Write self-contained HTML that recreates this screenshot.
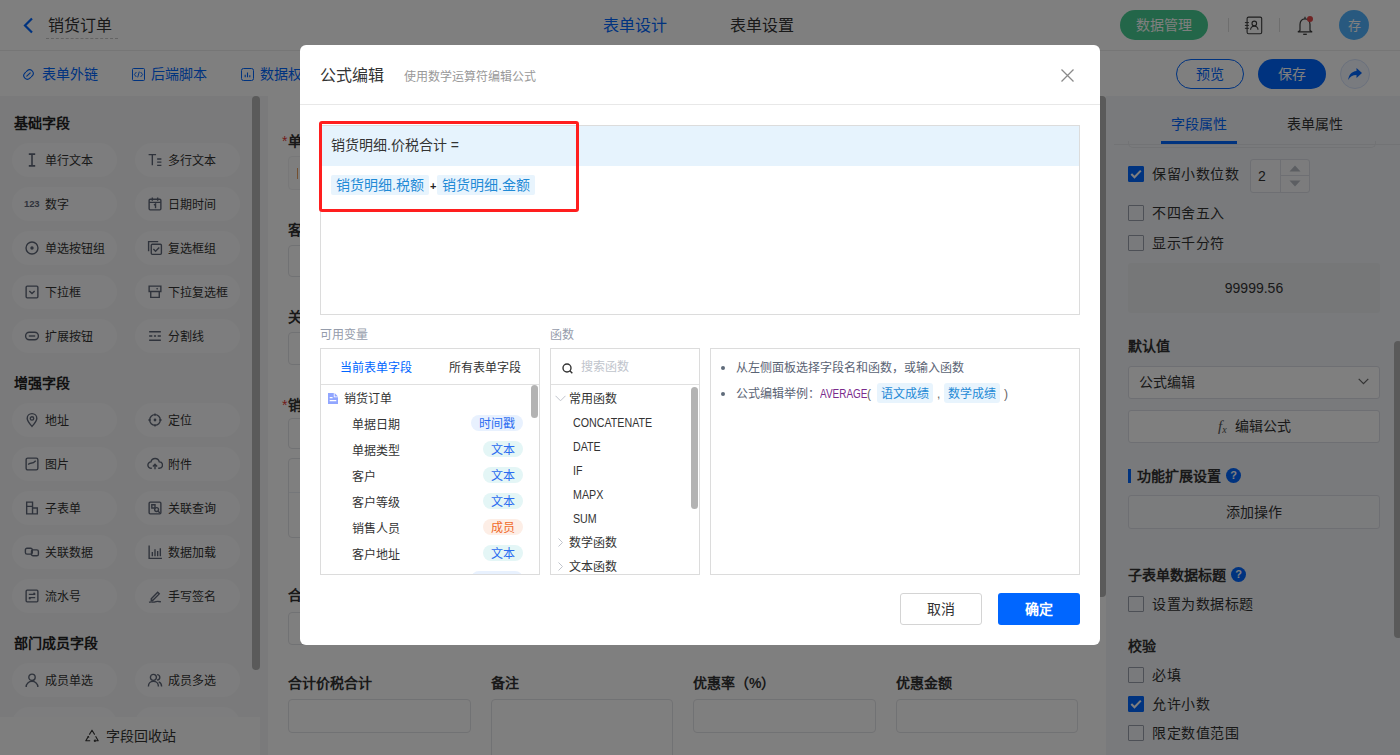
<!DOCTYPE html>
<html lang="zh-CN">
<head>
<meta charset="utf-8">
<style>
*{box-sizing:border-box;margin:0;padding:0}
html,body{width:1400px;height:755px;overflow:hidden;background:#fff}
body{position:relative;font-family:"Liberation Sans",sans-serif;color:#333;font-size:14px}
.a{position:absolute;white-space:nowrap}
.t14{font-size:14px;line-height:20px;height:20px}
.t16{font-size:16px;line-height:22px;height:22px;margin-top:1px}
.t12{font-size:12px;line-height:16px;height:16px}
svg{display:block}
/* page */
#hdr{left:0;top:0;width:1400px;height:51px;background:#fff;border-bottom:1px solid #ececec}
#tb{left:0;top:51px;width:1400px;height:45px;background:#fff}
#lp{left:0;top:96px;width:268px;height:659px;background:#f4f5f7}
#cv{display:none}
#form{left:268px;top:96px;width:838px;height:659px;background:#fff}
#rp{left:1106px;top:96px;width:294px;height:659px;background:#f3f5f8}
.pill{position:absolute;width:105px;height:34px;border-radius:17px;background:#fbfbfc}
.pill .ic{position:absolute;left:14px;top:10px;width:14px;height:14px}
.pill .tx{position:absolute;left:33px;top:7px;font-size:13px;line-height:20px;color:#333;white-space:nowrap}
.sec{position:absolute;left:14px;font-size:14px;font-weight:bold;line-height:20px;color:#222;margin-top:1px}
.lbl{position:absolute;font-size:14px;font-weight:bold;line-height:20px;color:#333}
.inp{position:absolute;border:1px solid #e2e4e8;border-radius:4px;background:#fff}
.cb{position:absolute;left:1128px;width:16px;height:16px;border:1px solid #9aa1ad;border-radius:1px;background:transparent}
.cb.on{background:#0066ff;border-color:#0066ff}
.cbt{position:absolute;left:1152px;font-size:14px;line-height:20px;color:#333;letter-spacing:.5px}
#ov{left:0;top:0;width:1400px;height:755px;background:rgba(0,0,0,.5)}
/* modal */
#md{left:300px;top:45px;width:800px;height:600px;background:#fff;border-radius:6px}
.m{position:absolute;white-space:nowrap}
.box{position:absolute;border:1px solid #dcdcdc;background:#fff}
.tag{display:inline-block;background:#e8f4fd;color:#1f8ad6;border-radius:2px}
.vt{position:absolute;height:16px;line-height:18px;font-size:12px;border-radius:8px;padding:0 8px;color:#2b6cf0;overflow:hidden}
.vt.b{background:#e8f1fe}
.vt.c{background:#e4f6f6}
.vt.o{background:#fdeee6;color:#f06a2a}
.vi{position:absolute;left:32px;font-size:12px;line-height:16px;color:#333}
.fi{position:absolute;left:22px;font-size:11.5px;line-height:16px;color:#333}
</style>
</head>
<body>
<!-- ============ HEADER ============ -->
<div class="a" id="hdr"></div>
<svg class="a" style="left:22px;top:17px" width="12" height="17" viewBox="0 0 12 17"><path d="M10 1.5 L3 8.5 L10 15.5" fill="none" stroke="#0066ff" stroke-width="2.2"/></svg>
<div class="a t16" style="left:48px;top:14px;color:#333">销货订单</div>
<div class="a" style="left:46px;top:38px;width:72px;border-top:1px dashed #c8c8c8"></div>
<div class="a t16" style="left:603px;top:14px;color:#0066ff">表单设计</div>
<div class="a t16" style="left:730px;top:14px;color:#333">表单设置</div>
<div class="a" style="left:1120px;top:10px;width:88px;height:30px;border-radius:15px;background:#47cd92"></div>
<div class="a t14" style="left:1136px;top:15px;color:#fff">数据管理</div>
<div class="a" style="left:1228px;top:18px;width:1px;height:14px;background:#ddd"></div>
<svg class="a" style="left:1244px;top:16px" width="19" height="19" viewBox="0 0 19 19"><rect x="3.1" y="1.1" width="14.6" height="16.6" rx="1.5" fill="none" stroke="#3c3c3c" stroke-width="1.1"/><circle cx="10.3" cy="7.4" r="2.3" fill="none" stroke="#3c3c3c" stroke-width="1.1"/><path d="M6.6 13.8 A3.7 3.7 0 0 1 14 13.8" fill="none" stroke="#3c3c3c" stroke-width="1.1"/><path d="M0.9 6.6H4.9M0.9 9.4H4.9M0.9 12.3H4.9" stroke="#3c3c3c" stroke-width="1"/></svg>
<div class="a" style="left:1279px;top:18px;width:1px;height:14px;background:#ddd"></div>
<svg class="a" style="left:1296px;top:15px" width="18" height="21" viewBox="0 0 18 21"><path d="M4 15.5 V9.5 C4 6.2 6 3.8 9 3.8 C12 3.8 14 6.2 14 9.5 V15.5 L15.8 16.8 H2.2 Z" fill="none" stroke="#3c3c3c" stroke-width="1.2" stroke-linejoin="round"/><path d="M7.2 19.3 H10.8" stroke="#3c3c3c" stroke-width="1.3"/><path d="M9 1.8 V3.8" stroke="#3c3c3c" stroke-width="1.2"/></svg>
<div class="a" style="left:1307px;top:16px;width:6px;height:6px;border-radius:50%;background:#e04848"></div>
<div class="a" style="left:1339px;top:10px;width:30px;height:30px;border-radius:50%;background:#50b3ff"></div>
<div class="a" style="left:1339px;top:16px;width:30px;text-align:center;font-size:13px;line-height:20px;color:#fff">存</div>

<!-- ============ TOOLBAR ============ -->
<div class="a" id="tb"></div>
<svg class="a" style="left:22px;top:68px" width="13" height="13" viewBox="0 0 13 13"><g fill="none" stroke="#0066ff" stroke-width="1.1" stroke-linecap="round"><path d="M4.38 3.53 L5.09 2.82 A3.6 3.6 0 0 1 10.18 7.91 L9.47 8.62"/><path d="M8.62 9.47 L7.91 10.18 A3.6 3.6 0 0 1 2.82 5.09 L3.53 4.38"/><path d="M4.80 8.20 L8.20 4.80"/></g></svg>
<div class="a t14" style="left:42px;top:64px;color:#0066ff">表单外链</div>
<svg class="a" style="left:132px;top:68px" width="13" height="13" viewBox="0 0 13 13"><rect x="0.5" y="0.5" width="12" height="12" rx="1" fill="none" stroke="#0066ff" stroke-width="1"/><path d="M4.4 4 L2.4 6.5 L4.4 9 M8.6 4 L10.6 6.5 L8.6 9 M7.3 3.6 L5.7 9.4" fill="none" stroke="#0066ff" stroke-width="0.95"/></svg>
<div class="a t14" style="left:151px;top:64px;color:#0066ff">后端脚本</div>
<svg class="a" style="left:241px;top:68px" width="13" height="13" viewBox="0 0 13 13"><rect x="0.5" y="0.5" width="12" height="12" rx="2" fill="none" stroke="#0066ff" stroke-width="1"/><path d="M4.2 6.8 V9.3 M6.5 4.6 V9.3 M8.8 7.3 V9.3" stroke="#0066ff" stroke-width="1.1"/></svg>
<div class="a t14" style="left:260px;top:64px;color:#0066ff">数据权限</div>
<div class="a" style="left:1176px;top:59px;width:68px;height:30px;border-radius:15px;border:1px solid #0066ff;background:#fff"></div>
<div class="a t14" style="left:1196px;top:64px;color:#0066ff">预览</div>
<div class="a" style="left:1258px;top:59px;width:68px;height:30px;border-radius:15px;background:#0066ff"></div>
<div class="a t14" style="left:1278px;top:64px;color:#fff">保存</div>
<div class="a" style="left:1340px;top:59px;width:30px;height:30px;border-radius:50%;background:#f2f6ff;border:1px solid #d6e2fa"></div>
<svg class="a" style="left:1347px;top:66px" width="16" height="16" viewBox="0 0 16 16"><path d="M9.5 2 L15 7 L9.5 12 V9 C5.5 9 3 10.5 1.2 14 C1.8 9 4.5 5.5 9.5 5 Z" fill="#0066ff"/></svg>

<!-- ============ LEFT PANEL ============ -->
<div class="a" id="lp"></div>
<div class="sec" style="top:112px">基础字段</div>
<div class="sec" style="top:371.5px">增强字段</div>
<div class="sec" style="top:631.5px">部门成员字段</div>
<div class="pill" style="left:12px;top:143px"></div>
<svg class="a" style="left:24px;top:152px" width="16" height="16" viewBox="-0.5 -0.5 15 15" fill="none" stroke="#5f6778" stroke-width="1.3"><path d="M4 1.5h6M4 12.5h6M7 1.5v11" stroke-width="1.5"/></svg>
<div class="a" style="left:45px;top:153px;font-size:12px;line-height:16px;color:#333">单行文本</div>
<div class="pill" style="left:135px;top:143px"></div>
<svg class="a" style="left:147px;top:152px" width="16" height="16" viewBox="-0.5 -0.5 15 15" fill="none" stroke="#5f6778" stroke-width="1.3"><path d="M1 2h7M4.5 2v10M9 6h4M9 9h4M9 12h4" stroke-width="1.3"/></svg>
<div class="a" style="left:168px;top:153px;font-size:12px;line-height:16px;color:#333">多行文本</div>
<div class="pill" style="left:12px;top:187px"></div>
<div class="a" style="left:24px;top:198px;font-size:9.5px;font-weight:bold;line-height:12px;color:#5f6778;letter-spacing:-0.1px">123</div>
<div class="a" style="left:45px;top:197px;font-size:12px;line-height:16px;color:#333">数字</div>
<div class="pill" style="left:135px;top:187px"></div>
<svg class="a" style="left:147px;top:196px" width="16" height="16" viewBox="-0.5 -0.5 15 15" fill="none" stroke="#5f6778" stroke-width="1.3"><rect x="1.5" y="2.5" width="11" height="10" rx="1"/><path d="M1.5 5.5h11M4.5 1v3M9.5 1v3M6 8l1.5-1v4"/></svg>
<div class="a" style="left:168px;top:197px;font-size:12px;line-height:16px;color:#333">日期时间</div>
<div class="pill" style="left:12px;top:231px"></div>
<svg class="a" style="left:24px;top:240px" width="16" height="16" viewBox="-0.5 -0.5 15 15" fill="none" stroke="#5f6778" stroke-width="1.3"><circle cx="7" cy="7" r="5.6"/><circle cx="7" cy="7" r="1.6" fill="#5f6778" stroke="none"/></svg>
<div class="a" style="left:45px;top:241px;font-size:12px;line-height:16px;color:#333">单选按钮组</div>
<div class="pill" style="left:135px;top:231px"></div>
<svg class="a" style="left:147px;top:240px" width="16" height="16" viewBox="-0.5 -0.5 15 15" fill="none" stroke="#5f6778" stroke-width="1.3"><path d="M1 10V1h9"/><rect x="3.5" y="3.5" width="9.5" height="9.5" rx="1"/><path d="M5.5 8l2 2 3.5-3.5"/></svg>
<div class="a" style="left:168px;top:241px;font-size:12px;line-height:16px;color:#333">复选框组</div>
<div class="pill" style="left:12px;top:275px"></div>
<svg class="a" style="left:24px;top:284px" width="16" height="16" viewBox="-0.5 -0.5 15 15" fill="none" stroke="#5f6778" stroke-width="1.3"><rect x="1.5" y="1.5" width="11" height="11" rx="1"/><path d="M4.5 6l2.5 2.5 2.5-2.5"/></svg>
<div class="a" style="left:45px;top:285px;font-size:12px;line-height:16px;color:#333">下拉框</div>
<div class="pill" style="left:135px;top:275px"></div>
<svg class="a" style="left:147px;top:284px" width="16" height="16" viewBox="-0.5 -0.5 15 15" fill="none" stroke="#5f6778" stroke-width="1.3"><path d="M1.5 1.5h11v5h-11zM3 6.5v5.5h8V6.5"/><path d="M8.5 3.5l1 1"/></svg>
<div class="a" style="left:168px;top:285px;font-size:12px;line-height:16px;color:#333">下拉复选框</div>
<div class="pill" style="left:12px;top:319px"></div>
<svg class="a" style="left:24px;top:328px" width="16" height="16" viewBox="-0.5 -0.5 15 15" fill="none" stroke="#5f6778" stroke-width="1.3"><rect x="1" y="3.5" width="12" height="7" rx="3.5"/><path d="M4 7h6"/></svg>
<div class="a" style="left:45px;top:329px;font-size:12px;line-height:16px;color:#333">扩展按钮</div>
<div class="pill" style="left:135px;top:319px"></div>
<svg class="a" style="left:147px;top:328px" width="16" height="16" viewBox="-0.5 -0.5 15 15" fill="none" stroke="#5f6778" stroke-width="1.3"><path d="M1.5 3h11M1.5 7h3M6 7h2M9.5 7h3M1.5 11h11"/></svg>
<div class="a" style="left:168px;top:329px;font-size:12px;line-height:16px;color:#333">分割线</div>
<div class="pill" style="left:12px;top:403px"></div>
<svg class="a" style="left:24px;top:412px" width="16" height="16" viewBox="-0.5 -0.5 15 15" fill="none" stroke="#5f6778" stroke-width="1.3"><path d="M7 13C3.5 9 2.5 7.3 2.5 5.5a4.5 4.5 0 0 1 9 0C11.5 7.3 10.5 9 7 13z"/><circle cx="7" cy="5.5" r="1.6"/></svg>
<div class="a" style="left:45px;top:413px;font-size:12px;line-height:16px;color:#333">地址</div>
<div class="pill" style="left:135px;top:403px"></div>
<svg class="a" style="left:147px;top:412px" width="16" height="16" viewBox="-0.5 -0.5 15 15" fill="none" stroke="#5f6778" stroke-width="1.3"><circle cx="7" cy="7" r="5"/><circle cx="7" cy="7" r="1.3" fill="#5f6778" stroke="none"/><path d="M7 0.8v2.2M7 11v2.2M0.8 7H3M11 7h2.2"/></svg>
<div class="a" style="left:168px;top:413px;font-size:12px;line-height:16px;color:#333">定位</div>
<div class="pill" style="left:12px;top:447px"></div>
<svg class="a" style="left:24px;top:456px" width="16" height="16" viewBox="-0.5 -0.5 15 15" fill="none" stroke="#5f6778" stroke-width="1.3"><rect x="1.5" y="1.5" width="11" height="11" rx="1.5"/><path d="M3.5 7.5C5 5 7 8 10.5 4"/></svg>
<div class="a" style="left:45px;top:457px;font-size:12px;line-height:16px;color:#333">图片</div>
<div class="pill" style="left:135px;top:447px"></div>
<svg class="a" style="left:147px;top:456px" width="16" height="16" viewBox="-0.5 -0.5 15 15" fill="none" stroke="#5f6778" stroke-width="1.3"><path d="M4 11H3.5a3 3 0 0 1-.3-6A4 4 0 0 1 11 5a3 3 0 0 1 0 6h-1"/><path d="M7 12V7.5M5 9.3l2-2 2 2"/></svg>
<div class="a" style="left:168px;top:457px;font-size:12px;line-height:16px;color:#333">附件</div>
<div class="pill" style="left:12px;top:491px"></div>
<svg class="a" style="left:24px;top:500px" width="16" height="16" viewBox="-0.5 -0.5 15 15" fill="none" stroke="#5f6778" stroke-width="1.3"><path d="M2 1.5h5.5v11H2zM7.5 7h4.5v5.5H7.5M2 5.5h5.5"/></svg>
<div class="a" style="left:45px;top:501px;font-size:12px;line-height:16px;color:#333">子表单</div>
<div class="pill" style="left:135px;top:491px"></div>
<svg class="a" style="left:147px;top:500px" width="16" height="16" viewBox="-0.5 -0.5 15 15" fill="none" stroke="#5f6778" stroke-width="1.3"><rect x="1.5" y="1.5" width="11" height="11" rx="1"/><path d="M4 4h3v3H4z"/><circle cx="8.5" cy="8.5" r="1.8"/><path d="M9.8 9.8l1.8 1.8"/></svg>
<div class="a" style="left:168px;top:501px;font-size:12px;line-height:16px;color:#333">关联查询</div>
<div class="pill" style="left:12px;top:535px"></div>
<svg class="a" style="left:24px;top:544px" width="16" height="16" viewBox="-0.5 -0.5 15 15" fill="none" stroke="#5f6778" stroke-width="1.3"><rect x="0.8" y="3.5" width="6.5" height="5.5" rx="1.5"/><rect x="6.5" y="5" width="6.5" height="5.5" rx="1.5"/></svg>
<div class="a" style="left:45px;top:545px;font-size:12px;line-height:16px;color:#333">关联数据</div>
<div class="pill" style="left:135px;top:535px"></div>
<svg class="a" style="left:147px;top:544px" width="16" height="16" viewBox="-0.5 -0.5 15 15" fill="none" stroke="#5f6778" stroke-width="1.3"><path d="M1.5 1v12h12M4.5 7v4M7 4.5v6.5M9.5 6v5M12 3.5v7.5"/></svg>
<div class="a" style="left:168px;top:545px;font-size:12px;line-height:16px;color:#333">数据加载</div>
<div class="pill" style="left:12px;top:579px"></div>
<svg class="a" style="left:24px;top:588px" width="16" height="16" viewBox="-0.5 -0.5 15 15" fill="none" stroke="#5f6778" stroke-width="1.3"><rect x="1.5" y="1.5" width="11" height="11" rx="1"/><path d="M4 5.5h6M8.5 4l1.5 1.5M10 8.5H4M5.5 10L4 8.5"/></svg>
<div class="a" style="left:45px;top:589px;font-size:12px;line-height:16px;color:#333">流水号</div>
<div class="pill" style="left:135px;top:579px"></div>
<svg class="a" style="left:147px;top:588px" width="16" height="16" viewBox="-0.5 -0.5 15 15" fill="none" stroke="#5f6778" stroke-width="1.3"><path d="M3.5 9.5L9.5 3.5l1.5 1.5-6 6H3.5zM1.5 13c2-1.5 3.5 0.5 5.5-0.5s3.5-0.5 5.5 0"/></svg>
<div class="a" style="left:168px;top:589px;font-size:12px;line-height:16px;color:#333">手写签名</div>
<div class="pill" style="left:12px;top:663px"></div>
<svg class="a" style="left:24px;top:672px" width="16" height="16" viewBox="-0.5 -0.5 15 15" fill="none" stroke="#5f6778" stroke-width="1.3"><circle cx="7" cy="4.5" r="3"/><path d="M1.5 13.5c0-3 2.5-5.3 5.5-5.3s5.5 2.3 5.5 5.3"/></svg>
<div class="a" style="left:45px;top:673px;font-size:12px;line-height:16px;color:#333">成员单选</div>
<div class="pill" style="left:135px;top:663px"></div>
<svg class="a" style="left:147px;top:672px" width="16" height="16" viewBox="-0.5 -0.5 15 15" fill="none" stroke="#5f6778" stroke-width="1.3"><circle cx="5.5" cy="4.5" r="2.8"/><path d="M0.8 13c0-2.8 2-4.8 4.7-4.8s4.7 2 4.7 4.8M9 2a2.5 2.5 0 0 1 0 5M10.5 8.7c1.6.6 2.7 2.2 2.7 4.3"/></svg>
<div class="a" style="left:168px;top:673px;font-size:12px;line-height:16px;color:#333">成员多选</div>
<div class="pill" style="left:12px;top:707px"></div>
<svg class="a" style="left:24px;top:716px" width="16" height="16" viewBox="-0.5 -0.5 15 15" fill="none" stroke="#5f6778" stroke-width="1.3"><rect x="1.5" y="1.5" width="11" height="11" rx="1"/></svg>
<div class="a" style="left:45px;top:717px;font-size:12px;line-height:16px;color:#333">部门单选</div>
<div class="pill" style="left:135px;top:707px"></div>
<svg class="a" style="left:147px;top:716px" width="16" height="16" viewBox="-0.5 -0.5 15 15" fill="none" stroke="#5f6778" stroke-width="1.3"><rect x="1.5" y="1.5" width="11" height="11" rx="1"/></svg>
<div class="a" style="left:168px;top:717px;font-size:12px;line-height:16px;color:#333">部门多选</div>
<div class="a" style="left:252px;top:96px;width:8px;height:574px;border-radius:4px;background:#b4b4b4"></div>
<div class="a" style="left:0;top:717px;width:260px;height:38px;background:#fdfdfd"></div>
<svg class="a" style="left:85px;top:729px" width="14" height="13" viewBox="0 0 14 13" fill="none" stroke="#5f6778" stroke-width="1.3"><path d="M4.3 5.6L7 1.2 9.7 5.6M10.6 7.2L13.2 11.8H9.2M10.4 10.5L9.2 11.8 10.4 13M5.2 11.8H0.8L3.4 7.4M2.4 7.9L3.4 7.4 3.9 8.6" stroke="#333" stroke-width="1.1" stroke-linejoin="round"/></svg>
<div class="a t14" style="left:106px;top:726px;color:#333">字段回收站</div>
<!-- ============ <div class="a" style="left:282px;top:131px;font-size:14px;line-height:20px;color:#e53935">*</div>
<div class="lbl" style="left:288px;top:131px">单据日期</div>
<div class="a" style="left:288px;top:156px;width:400px;height:34px;border:1px solid #f0f1f3;border-radius:4px;background:#fcfcfc"></div>
<div class="a" style="left:297px;top:168px;width:1px;height:11px;background:#e8a060"></div>
<div class="lbl" style="left:288px;top:220px">客户</div>
<div class="inp" style="left:288px;top:245px;width:400px;height:32px"></div>
<div class="lbl" style="left:288px;top:307px">关联单据</div>
<div class="inp" style="left:288px;top:332px;width:400px;height:33px"></div>
<div class="a" style="left:282px;top:395px;font-size:14px;line-height:20px;color:#e53935">*</div>
<div class="lbl" style="left:288px;top:395px">销货明细</div>
<div class="inp" style="left:288px;top:418px;width:790px;height:31px"></div>
<div class="inp" style="left:288px;top:458px;width:790px;height:80px"></div>
<div class="a" style="left:289px;top:492px;width:788px;height:1px;background:#ebeef5"></div>
<div class="lbl" style="left:288px;top:585px">合计金额</div>
<div class="inp" style="left:288px;top:612px;width:182px;height:33px"></div>
<div class="lbl" style="left:288px;top:673px">合计价税合计</div>
<div class="lbl" style="left:491px;top:673px">备注</div>
<div class="lbl" style="left:693px;top:673px">优惠率（%）</div>
<div class="lbl" style="left:896px;top:673px">优惠金额</div>
<div class="inp" style="left:288px;top:699px;width:183px;height:34px"></div>
<div class="inp" style="left:491px;top:699px;width:182px;height:70px"></div>
<div class="inp" style="left:693px;top:699px;width:183px;height:34px"></div>
<div class="inp" style="left:896px;top:699px;width:182px;height:34px"></div>
<div class="a" style="left:1100px;top:96px;width:6px;height:501px;border-radius:0 4px 4px 0;background:#b4b4b4"></div> ============ -->
<div class="a" id="cv"></div>
<div class="a" id="form"></div>
<div class="a" style="left:282px;top:131px;font-size:14px;line-height:20px;color:#e53935">*</div>
<div class="lbl" style="left:288px;top:131px">单据日期</div>
<div class="a" style="left:288px;top:156px;width:400px;height:34px;border:1px solid #f0f1f3;border-radius:4px;background:#fcfcfc"></div>
<div class="a" style="left:297px;top:168px;width:1px;height:11px;background:#e8a060"></div>
<div class="lbl" style="left:288px;top:220px">客户</div>
<div class="inp" style="left:288px;top:245px;width:400px;height:32px"></div>
<div class="lbl" style="left:288px;top:307px">关联单据</div>
<div class="inp" style="left:288px;top:332px;width:400px;height:33px"></div>
<div class="a" style="left:282px;top:395px;font-size:14px;line-height:20px;color:#e53935">*</div>
<div class="lbl" style="left:288px;top:395px">销货明细</div>
<div class="inp" style="left:288px;top:418px;width:790px;height:31px"></div>
<div class="inp" style="left:288px;top:458px;width:790px;height:80px"></div>
<div class="a" style="left:289px;top:492px;width:788px;height:1px;background:#ebeef5"></div>
<div class="lbl" style="left:288px;top:585px">合计金额</div>
<div class="inp" style="left:288px;top:612px;width:182px;height:33px"></div>
<div class="lbl" style="left:288px;top:673px">合计价税合计</div>
<div class="lbl" style="left:491px;top:673px">备注</div>
<div class="lbl" style="left:693px;top:673px">优惠率（%）</div>
<div class="lbl" style="left:896px;top:673px">优惠金额</div>
<div class="inp" style="left:288px;top:699px;width:183px;height:34px"></div>
<div class="inp" style="left:491px;top:699px;width:182px;height:70px"></div>
<div class="inp" style="left:693px;top:699px;width:183px;height:34px"></div>
<div class="inp" style="left:896px;top:699px;width:182px;height:34px"></div>
<div class="a" style="left:1100px;top:96px;width:6px;height:501px;border-radius:0 4px 4px 0;background:#b4b4b4"></div>
<!-- ============ RIGHT PANEL ============ -->
<div class="a" id="rp"></div>
<div class="a" style="left:1171px;top:114px;font-size:14px;line-height:20px;color:#0066ff">字段属性</div>
<div class="a" style="left:1287px;top:114px;font-size:14px;line-height:20px;color:#333">表单属性</div>
<div class="a" style="left:1114px;top:144px;width:286px;height:1px;background:#e4e6ea"></div>
<div class="a" style="left:1161px;top:141px;width:76px;height:3px;background:#0066ff"></div>
<div class="a" style="left:1128px;top:141px;width:248px;height:7px;border:1px solid #e4e6ea;border-top:none;border-radius:0 0 5px 5px"></div>
<div class="cb on" style="top:166px"></div>
<svg class="a" style="left:1130px;top:169px" width="12" height="10" viewBox="0 0 12 10"><path d="M1.3 5L4.5 8.2L10.8 1.6" fill="none" stroke="#fff" stroke-width="2.1"/></svg>
<div class="cbt" style="top:164px">保留小数位数</div>
<div class="a" style="left:1250px;top:159px;width:60px;height:34px;border:1px solid #dcdfe6;border-radius:3px;background:#f8f9fb"></div>
<div class="a" style="left:1280px;top:160px;width:1px;height:32px;background:#dcdfe6"></div>
<div class="a" style="left:1281px;top:175px;width:28px;height:1px;background:#dcdfe6"></div>
<div class="a" style="left:1258px;top:166px;font-size:14px;line-height:20px;color:#333">2</div>
<svg class="a" style="left:1289px;top:165px" width="12" height="7" viewBox="0 0 12 7"><path d="M6 0.5L11.5 6.5H0.5Z" fill="#b8bcc4"/></svg>
<svg class="a" style="left:1289px;top:180px" width="12" height="7" viewBox="0 0 12 7"><path d="M6 6.5L11.5 0.5H0.5Z" fill="#b8bcc4"/></svg>
<div class="cb" style="top:205px"></div>
<div class="cbt" style="top:203px">不四舍五入</div>
<div class="cb" style="top:235px"></div>
<div class="cbt" style="top:233px">显示千分符</div>
<div class="a" style="left:1128px;top:263px;width:252px;height:50px;background:#eceef1;border-radius:3px"></div>
<div class="a" style="left:1128px;top:278px;width:252px;text-align:center;font-size:14px;line-height:20px;color:#333">99999.56</div>
<div class="lbl" style="left:1128px;top:336px;color:#333">默认值</div>
<div class="a" style="left:1128px;top:366px;width:252px;height:33px;border:1px solid #dcdfe6;border-radius:3px;background:#fff"></div>
<div class="a" style="left:1139px;top:372px;font-size:14px;line-height:20px;color:#333">公式编辑</div>
<svg class="a" style="left:1358px;top:378px" width="11" height="7" viewBox="0 0 11 7"><path d="M0.7 0.8L5.5 5.6L10.3 0.8" fill="none" stroke="#666" stroke-width="1.2"/></svg>
<div class="a" style="left:1128px;top:410px;width:252px;height:33px;border:1px solid #dcdfe6;border-radius:3px;background:#fff"></div>
<div class="a" style="left:1218px;top:416px;font-size:15px;line-height:20px;color:#555;font-family:'Liberation Serif',serif;font-style:italic">f<span style="font-size:10px;position:relative;top:2px">x</span></div>
<div class="a" style="left:1235px;top:416px;font-size:14px;line-height:20px;color:#333">编辑公式</div>
<div class="a" style="left:1128px;top:469px;width:3px;height:14px;background:#0066ff"></div>
<div class="lbl" style="left:1137px;top:466px">功能扩展设置</div>
<div class="a" style="left:1226px;top:468px;width:15px;height:15px;border-radius:50%;background:#0066ff;color:#fff;font-size:11px;font-weight:bold;line-height:15px;text-align:center">?</div>
<div class="a" style="left:1128px;top:495px;width:252px;height:34px;border:1px solid #dcdfe6;border-radius:3px;background:#f7f8fa"></div>
<div class="a" style="left:1128px;top:502px;width:252px;text-align:center;font-size:14px;line-height:20px;color:#333">添加操作</div>
<div class="lbl" style="left:1128px;top:565px">子表单数据标题</div>
<div class="a" style="left:1231px;top:567px;width:15px;height:15px;border-radius:50%;background:#0066ff;color:#fff;font-size:11px;font-weight:bold;line-height:15px;text-align:center">?</div>
<div class="cb" style="top:596px"></div>
<div class="cbt" style="top:594px">设置为数据标题</div>
<div class="lbl" style="left:1128px;top:636px">校验</div>
<div class="cb" style="top:667px"></div>
<div class="cbt" style="top:665px">必填</div>
<div class="cb on" style="top:696px"></div>
<svg class="a" style="left:1130px;top:699px" width="12" height="10" viewBox="0 0 12 10"><path d="M1.3 5L4.5 8.2L10.8 1.6" fill="none" stroke="#fff" stroke-width="2.1"/></svg>
<div class="cbt" style="top:694px">允许小数</div>
<div class="cb" style="top:725px"></div>
<div class="cbt" style="top:723px">限定数值范围</div>
<div class="a" style="left:1394px;top:341px;width:8px;height:297px;border-radius:4px;background:#b4b4b4"></div>

<!-- ============ OVERLAY ============ -->
<div class="a" id="ov"></div>

<!-- ============ <div class="a" style="left:320px;top:65px;font-size:16px;line-height:22px;color:#333">公式编辑</div>
<div class="a" style="left:404px;top:69px;font-size:12px;line-height:16px;color:#999">使用数学运算符编辑公式</div>
<svg class="a" style="left:1060px;top:68px" width="15" height="15" viewBox="0 0 15 15"><path d="M1.5 1.5L13.5 13.5M13.5 1.5L1.5 13.5" stroke="#8a8a8a" stroke-width="1.3"/></svg>
<div class="a" style="left:300px;top:104px;width:800px;height:1px;background:#e8e8e8"></div>
<div class="a" style="left:320px;top:125px;width:760px;height:190px;border:1px solid #dcdcdc;background:#fff"></div>
<div class="a" style="left:321px;top:126px;width:758px;height:40px;background:#e6f3fd"></div>
<div class="a" style="left:331px;top:135px;font-size:14px;line-height:20px;color:#333">销货明细.价税合计 =</div>
<div class="a" style="left:331px;top:175px;width:98px;height:20px;background:#e8f4fd;border-radius:2px"></div>
<div class="a" style="left:336px;top:175px;font-size:14px;line-height:20px;color:#1f8ad6">销货明细.税额</div>
<div class="a" style="left:430px;top:176px;font-size:11px;line-height:20px;color:#222;font-weight:bold">+</div>
<div class="a" style="left:437px;top:175px;width:98px;height:20px;background:#e8f4fd;border-radius:2px"></div>
<div class="a" style="left:442px;top:175px;font-size:14px;line-height:20px;color:#1f8ad6">销货明细.金额</div>
<div class="a" style="left:319px;top:121px;width:260px;height:91px;border:3px solid #ff1e1e;border-radius:3px"></div>
<div class="a" style="left:320px;top:327px;font-size:12px;line-height:16px;color:#959cab">可用变量</div>
<div class="a" style="left:550px;top:327px;font-size:12px;line-height:16px;color:#959cab">函数</div>
<div class="a" style="left:320px;top:348px;width:220px;height:227px;border:1px solid #dcdcdc;background:#fff;overflow:hidden"><div class="a" style="left:19px;top:11px;font-size:12px;line-height:16px;color:#0066ff">当前表单字段</div><div class="a" style="left:128px;top:11px;font-size:12px;line-height:16px;color:#333">所有表单字段</div><div class="a" style="left:0;top:35px;width:218px;height:1px;background:#e0e0e0"></div><svg class="a" style="left:7px;top:44px" width="10" height="11" viewBox="0 0 10 11"><path d="M0 0H5.8V4.2H10V11H0Z" fill="#91a6ff"/><path d="M6.6 0L10 3.4H6.6Z" fill="#91a6ff"/><path d="M1.7 4.6H4.6M1.7 7.6H8.3" stroke="#fff" stroke-width="1.1"/></svg><div class="a" style="left:23px;top:42px;font-size:12px;line-height:16px;color:#333">销货订单</div><div class="a" style="left:31px;top:68px;font-size:12px;line-height:16px;color:#333">单据日期</div><div class="a" style="left:31px;top:94px;font-size:12px;line-height:16px;color:#333">单据类型</div><div class="a" style="left:31px;top:120px;font-size:12px;line-height:16px;color:#333">客户</div><div class="a" style="left:31px;top:146px;font-size:12px;line-height:16px;color:#333">客户等级</div><div class="a" style="left:31px;top:172px;font-size:12px;line-height:16px;color:#333">销售人员</div><div class="a" style="left:31px;top:198px;font-size:12px;line-height:16px;color:#333">客户地址</div><div class="a" style="left:31px;top:224px;font-size:12px;line-height:16px;color:#333"></div><div class="vt b" style="right:16px;top:66px">时间戳</div><div class="vt c" style="right:16px;top:92px">文本</div><div class="vt c" style="right:16px;top:118px">文本</div><div class="vt c" style="right:16px;top:144px">文本</div><div class="vt o" style="right:16px;top:170px">成员</div><div class="vt c" style="right:16px;top:196px">文本</div><div class="vt b" style="right:16px;top:222px;width:52px"></div><div class="a" style="left:210px;top:36px;width:7px;height:33px;border-radius:4px;background:#b3b3b3"></div></div>
<div class="a" style="left:550px;top:348px;width:150px;height:227px;border:1px solid #dcdcdc;background:#fff;overflow:hidden"><svg class="a" style="left:11px;top:14px" width="11" height="11" viewBox="0 0 11 11"><circle cx="5" cy="5" r="4" fill="none" stroke="#333" stroke-width="1.4"/><path d="M7.8 7.8L10.3 10.3" stroke="#333" stroke-width="1.4"/></svg><div class="a" style="left:30px;top:10px;font-size:12px;line-height:16px;color:#c0c4cc">搜索函数</div><div class="a" style="left:0;top:35px;width:148px;height:1px;background:#e0e0e0"></div><svg class="a" style="left:4px;top:46px" width="11" height="7" viewBox="0 0 11 7"><path d="M0.5 0.8L5.5 5.8L10.5 0.8" fill="none" stroke="#c0c4cc" stroke-width="1"/></svg><div class="a" style="left:18px;top:42px;font-size:12px;line-height:16px;color:#333">常用函数</div><div class="a" style="left:22px;top:66px;font-size:12px;line-height:16px;color:#333;transform:scaleX(0.89);transform-origin:0 0">CONCATENATE</div><div class="a" style="left:22px;top:90px;font-size:12px;line-height:16px;color:#333;transform:scaleX(0.89);transform-origin:0 0">DATE</div><div class="a" style="left:22px;top:114px;font-size:12px;line-height:16px;color:#333;transform:scaleX(0.89);transform-origin:0 0">IF</div><div class="a" style="left:22px;top:138px;font-size:12px;line-height:16px;color:#333;transform:scaleX(0.89);transform-origin:0 0">MAPX</div><div class="a" style="left:22px;top:162px;font-size:12px;line-height:16px;color:#333;transform:scaleX(0.89);transform-origin:0 0">SUM</div><svg class="a" style="left:7px;top:189px" width="5" height="9" viewBox="0 0 5 9"><path d="M0.5 0.5L4.5 4.5L0.5 8.5" fill="none" stroke="#c0c4cc" stroke-width="1"/></svg><div class="a" style="left:18px;top:186px;font-size:12px;line-height:16px;color:#333">数学函数</div><svg class="a" style="left:7px;top:213px" width="5" height="9" viewBox="0 0 5 9"><path d="M0.5 0.5L4.5 4.5L0.5 8.5" fill="none" stroke="#c0c4cc" stroke-width="1"/></svg><div class="a" style="left:18px;top:210px;font-size:12px;line-height:16px;color:#333">文本函数</div><div class="a" style="left:140px;top:38px;width:7px;height:122px;border-radius:4px;background:#b3b3b3"></div></div>
<div class="a" style="left:710px;top:348px;width:370px;height:227px;border:1px solid #dcdcdc;background:#fff"></div>
<div class="a" style="left:721px;top:366px;width:4px;height:4px;border-radius:50%;background:#5f6b7a"></div>
<div class="a" style="left:721px;top:392px;width:4px;height:4px;border-radius:50%;background:#5f6b7a"></div>
<div class="a" style="left:736px;top:360px;font-size:12px;line-height:16px;color:#5a6374">从左侧面板选择字段名和函数，或输入函数</div>
<div class="a" style="left:736px;top:386px;font-size:12px;line-height:16px;color:#5a6374">公式编辑举例：</div>
<div class="a" style="left:820px;top:386px;font-size:12px;line-height:16px;color:#7a2b8c;transform:scaleX(0.83);transform-origin:0 0">AVERAGE</div>
<div class="a" style="left:867px;top:386px;font-size:12px;line-height:16px;color:#666">(</div>
<div class="a" style="left:877px;top:383px;width:56px;height:20px;background:#e8f4fd;border-radius:3px"></div>
<div class="a" style="left:881px;top:386px;font-size:12px;line-height:16px;color:#1f8ad6">语文成绩</div>
<div class="a" style="left:937px;top:386px;font-size:12px;line-height:16px;color:#666">,</div>
<div class="a" style="left:944px;top:383px;width:56px;height:20px;background:#e8f4fd;border-radius:3px"></div>
<div class="a" style="left:948px;top:386px;font-size:12px;line-height:16px;color:#1f8ad6">数学成绩</div>
<div class="a" style="left:1004px;top:386px;font-size:12px;line-height:16px;color:#666">)</div>
<div class="a" style="left:900px;top:593px;width:82px;height:32px;border:1px solid #d4d4d4;border-radius:3px;background:#fff"></div>
<div class="a" style="left:900px;top:599px;width:82px;text-align:center;font-size:14px;line-height:20px;color:#333">取消</div>
<div class="a" style="left:998px;top:593px;width:82px;height:32px;border-radius:3px;background:#0066ff"></div>
<div class="a" style="left:998px;top:599px;width:82px;text-align:center;font-size:14px;line-height:20px;color:#fff;font-weight:bold">确定</div> ============ -->
<div class="a" id="md"></div>
<div class="a" style="left:320px;top:65px;font-size:16px;line-height:22px;color:#333">公式编辑</div>
<div class="a" style="left:404px;top:69px;font-size:12px;line-height:16px;color:#999">使用数学运算符编辑公式</div>
<svg class="a" style="left:1060px;top:68px" width="15" height="15" viewBox="0 0 15 15"><path d="M1.5 1.5L13.5 13.5M13.5 1.5L1.5 13.5" stroke="#8a8a8a" stroke-width="1.3"/></svg>
<div class="a" style="left:300px;top:104px;width:800px;height:1px;background:#e8e8e8"></div>
<div class="a" style="left:320px;top:125px;width:760px;height:190px;border:1px solid #dcdcdc;background:#fff"></div>
<div class="a" style="left:321px;top:126px;width:758px;height:40px;background:#e6f3fd"></div>
<div class="a" style="left:331px;top:135px;font-size:14px;line-height:20px;color:#333">销货明细.价税合计 =</div>
<div class="a" style="left:331px;top:175px;width:98px;height:20px;background:#e8f4fd;border-radius:2px"></div>
<div class="a" style="left:336px;top:175px;font-size:14px;line-height:20px;color:#1f8ad6">销货明细.税额</div>
<div class="a" style="left:430px;top:176px;font-size:11px;line-height:20px;color:#222;font-weight:bold">+</div>
<div class="a" style="left:437px;top:175px;width:98px;height:20px;background:#e8f4fd;border-radius:2px"></div>
<div class="a" style="left:442px;top:175px;font-size:14px;line-height:20px;color:#1f8ad6">销货明细.金额</div>
<div class="a" style="left:319px;top:121px;width:260px;height:91px;border:3px solid #ff1e1e;border-radius:3px"></div>
<div class="a" style="left:320px;top:327px;font-size:12px;line-height:16px;color:#959cab">可用变量</div>
<div class="a" style="left:550px;top:327px;font-size:12px;line-height:16px;color:#959cab">函数</div>
<div class="a" style="left:320px;top:348px;width:220px;height:227px;border:1px solid #dcdcdc;background:#fff;overflow:hidden"><div class="a" style="left:19px;top:11px;font-size:12px;line-height:16px;color:#0066ff">当前表单字段</div><div class="a" style="left:128px;top:11px;font-size:12px;line-height:16px;color:#333">所有表单字段</div><div class="a" style="left:0;top:35px;width:218px;height:1px;background:#e0e0e0"></div><svg class="a" style="left:7px;top:44px" width="10" height="11" viewBox="0 0 10 11"><path d="M0 0H5.8V4.2H10V11H0Z" fill="#91a6ff"/><path d="M6.6 0L10 3.4H6.6Z" fill="#91a6ff"/><path d="M1.7 4.6H4.6M1.7 7.6H8.3" stroke="#fff" stroke-width="1.1"/></svg><div class="a" style="left:23px;top:42px;font-size:12px;line-height:16px;color:#333">销货订单</div><div class="a" style="left:31px;top:68px;font-size:12px;line-height:16px;color:#333">单据日期</div><div class="a" style="left:31px;top:94px;font-size:12px;line-height:16px;color:#333">单据类型</div><div class="a" style="left:31px;top:120px;font-size:12px;line-height:16px;color:#333">客户</div><div class="a" style="left:31px;top:146px;font-size:12px;line-height:16px;color:#333">客户等级</div><div class="a" style="left:31px;top:172px;font-size:12px;line-height:16px;color:#333">销售人员</div><div class="a" style="left:31px;top:198px;font-size:12px;line-height:16px;color:#333">客户地址</div><div class="a" style="left:31px;top:224px;font-size:12px;line-height:16px;color:#333"></div><div class="vt b" style="right:16px;top:66px">时间戳</div><div class="vt c" style="right:16px;top:92px">文本</div><div class="vt c" style="right:16px;top:118px">文本</div><div class="vt c" style="right:16px;top:144px">文本</div><div class="vt o" style="right:16px;top:170px">成员</div><div class="vt c" style="right:16px;top:196px">文本</div><div class="vt b" style="right:16px;top:222px;width:52px"></div><div class="a" style="left:210px;top:36px;width:7px;height:33px;border-radius:4px;background:#b3b3b3"></div></div>
<div class="a" style="left:550px;top:348px;width:150px;height:227px;border:1px solid #dcdcdc;background:#fff;overflow:hidden"><svg class="a" style="left:11px;top:14px" width="11" height="11" viewBox="0 0 11 11"><circle cx="5" cy="5" r="4" fill="none" stroke="#333" stroke-width="1.4"/><path d="M7.8 7.8L10.3 10.3" stroke="#333" stroke-width="1.4"/></svg><div class="a" style="left:30px;top:10px;font-size:12px;line-height:16px;color:#c0c4cc">搜索函数</div><div class="a" style="left:0;top:35px;width:148px;height:1px;background:#e0e0e0"></div><svg class="a" style="left:4px;top:46px" width="11" height="7" viewBox="0 0 11 7"><path d="M0.5 0.8L5.5 5.8L10.5 0.8" fill="none" stroke="#c0c4cc" stroke-width="1"/></svg><div class="a" style="left:18px;top:42px;font-size:12px;line-height:16px;color:#333">常用函数</div><div class="a" style="left:22px;top:66px;font-size:12px;line-height:16px;color:#333;transform:scaleX(0.89);transform-origin:0 0">CONCATENATE</div><div class="a" style="left:22px;top:90px;font-size:12px;line-height:16px;color:#333;transform:scaleX(0.89);transform-origin:0 0">DATE</div><div class="a" style="left:22px;top:114px;font-size:12px;line-height:16px;color:#333;transform:scaleX(0.89);transform-origin:0 0">IF</div><div class="a" style="left:22px;top:138px;font-size:12px;line-height:16px;color:#333;transform:scaleX(0.89);transform-origin:0 0">MAPX</div><div class="a" style="left:22px;top:162px;font-size:12px;line-height:16px;color:#333;transform:scaleX(0.89);transform-origin:0 0">SUM</div><svg class="a" style="left:7px;top:189px" width="5" height="9" viewBox="0 0 5 9"><path d="M0.5 0.5L4.5 4.5L0.5 8.5" fill="none" stroke="#c0c4cc" stroke-width="1"/></svg><div class="a" style="left:18px;top:186px;font-size:12px;line-height:16px;color:#333">数学函数</div><svg class="a" style="left:7px;top:213px" width="5" height="9" viewBox="0 0 5 9"><path d="M0.5 0.5L4.5 4.5L0.5 8.5" fill="none" stroke="#c0c4cc" stroke-width="1"/></svg><div class="a" style="left:18px;top:210px;font-size:12px;line-height:16px;color:#333">文本函数</div><div class="a" style="left:140px;top:38px;width:7px;height:122px;border-radius:4px;background:#b3b3b3"></div></div>
<div class="a" style="left:710px;top:348px;width:370px;height:227px;border:1px solid #dcdcdc;background:#fff"></div>
<div class="a" style="left:721px;top:366px;width:4px;height:4px;border-radius:50%;background:#5f6b7a"></div>
<div class="a" style="left:721px;top:392px;width:4px;height:4px;border-radius:50%;background:#5f6b7a"></div>
<div class="a" style="left:736px;top:360px;font-size:12px;line-height:16px;color:#5a6374">从左侧面板选择字段名和函数，或输入函数</div>
<div class="a" style="left:736px;top:386px;font-size:12px;line-height:16px;color:#5a6374">公式编辑举例：</div>
<div class="a" style="left:820px;top:386px;font-size:12px;line-height:16px;color:#7a2b8c;transform:scaleX(0.83);transform-origin:0 0">AVERAGE</div>
<div class="a" style="left:867px;top:386px;font-size:12px;line-height:16px;color:#666">(</div>
<div class="a" style="left:877px;top:383px;width:56px;height:20px;background:#e8f4fd;border-radius:3px"></div>
<div class="a" style="left:881px;top:386px;font-size:12px;line-height:16px;color:#1f8ad6">语文成绩</div>
<div class="a" style="left:937px;top:386px;font-size:12px;line-height:16px;color:#666">,</div>
<div class="a" style="left:944px;top:383px;width:56px;height:20px;background:#e8f4fd;border-radius:3px"></div>
<div class="a" style="left:948px;top:386px;font-size:12px;line-height:16px;color:#1f8ad6">数学成绩</div>
<div class="a" style="left:1004px;top:386px;font-size:12px;line-height:16px;color:#666">)</div>
<div class="a" style="left:900px;top:593px;width:82px;height:32px;border:1px solid #d4d4d4;border-radius:3px;background:#fff"></div>
<div class="a" style="left:900px;top:599px;width:82px;text-align:center;font-size:14px;line-height:20px;color:#333">取消</div>
<div class="a" style="left:998px;top:593px;width:82px;height:32px;border-radius:3px;background:#0066ff"></div>
<div class="a" style="left:998px;top:599px;width:82px;text-align:center;font-size:14px;line-height:20px;color:#fff;font-weight:bold">确定</div>
</body>
</html>
